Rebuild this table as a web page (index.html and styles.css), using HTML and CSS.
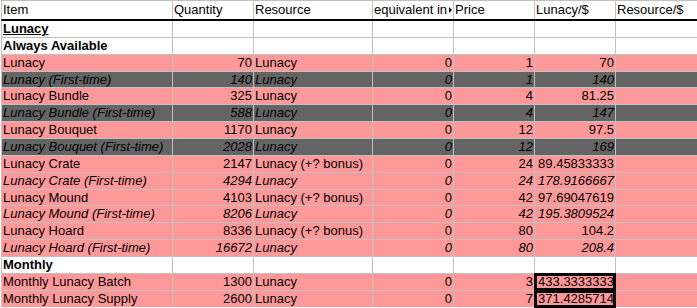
FILE: index.html
```html
<!DOCTYPE html>
<html>
<head>
<meta charset="utf-8">
<link rel="stylesheet" href="styles.css">
</head>
<body>
<div class="sheet">
  <div class="grid head">
    <div class="c">Item</div>
    <div class="c">Quantity</div>
    <div class="c">Resource</div>
    <div class="c ovf"><span class="clip">equivalent in</span><svg class="tri" width="3" height="6" viewBox="0 0 3 6"><polygon points="0,0 3,3 0,6" fill="#000"/></svg></div>
    <div class="c">Price</div>
    <div class="c">Lunacy/$</div>
    <div class="c">Resource/$</div>
  </div>
  <div class="grid body">
    <div class="row white">
      <div class="c b u">Lunacy</div><div class="c"></div><div class="c"></div><div class="c"></div><div class="c"></div><div class="c"></div><div class="c"></div>
    </div>
    <div class="row white">
      <div class="c b">Always Available</div><div class="c"></div><div class="c"></div><div class="c"></div><div class="c"></div><div class="c"></div><div class="c"></div>
    </div>
    <div class="row pink">
      <div class="c">Lunacy</div><div class="c r">70</div><div class="c">Lunacy</div><div class="c r">0</div><div class="c r">1</div><div class="c r">70</div><div class="c"></div>
    </div>
    <div class="row gray i">
      <div class="c">Lunacy (First-time)</div><div class="c r">140</div><div class="c">Lunacy</div><div class="c r">0</div><div class="c r">1</div><div class="c r">140</div><div class="c"></div>
    </div>
    <div class="row pink">
      <div class="c">Lunacy Bundle</div><div class="c r">325</div><div class="c">Lunacy</div><div class="c r">0</div><div class="c r">4</div><div class="c r">81.25</div><div class="c"></div>
    </div>
    <div class="row gray i">
      <div class="c">Lunacy Bundle (First-time)</div><div class="c r">588</div><div class="c">Lunacy</div><div class="c r">0</div><div class="c r">4</div><div class="c r">147</div><div class="c"></div>
    </div>
    <div class="row pink">
      <div class="c">Lunacy Bouquet</div><div class="c r">1170</div><div class="c">Lunacy</div><div class="c r">0</div><div class="c r">12</div><div class="c r">97.5</div><div class="c"></div>
    </div>
    <div class="row gray i">
      <div class="c">Lunacy Bouquet (First-time)</div><div class="c r">2028</div><div class="c">Lunacy</div><div class="c r">0</div><div class="c r">12</div><div class="c r">169</div><div class="c"></div>
    </div>
    <div class="row pink">
      <div class="c">Lunacy Crate</div><div class="c r">2147</div><div class="c">Lunacy (+? bonus)</div><div class="c r">0</div><div class="c r">24</div><div class="c r">89.45833333</div><div class="c"></div>
    </div>
    <div class="row pink i">
      <div class="c">Lunacy Crate (First-time)</div><div class="c r">4294</div><div class="c">Lunacy</div><div class="c r">0</div><div class="c r">24</div><div class="c r">178.9166667</div><div class="c"></div>
    </div>
    <div class="row pink">
      <div class="c">Lunacy Mound</div><div class="c r">4103</div><div class="c">Lunacy (+? bonus)</div><div class="c r">0</div><div class="c r">42</div><div class="c r">97.69047619</div><div class="c"></div>
    </div>
    <div class="row pink i">
      <div class="c">Lunacy Mound (First-time)</div><div class="c r">8206</div><div class="c">Lunacy</div><div class="c r">0</div><div class="c r">42</div><div class="c r">195.3809524</div><div class="c"></div>
    </div>
    <div class="row pink">
      <div class="c">Lunacy Hoard</div><div class="c r">8336</div><div class="c">Lunacy (+? bonus)</div><div class="c r">0</div><div class="c r">80</div><div class="c r">104.2</div><div class="c"></div>
    </div>
    <div class="row pink i">
      <div class="c">Lunacy Hoard (First-time)</div><div class="c r">16672</div><div class="c">Lunacy</div><div class="c r">0</div><div class="c r">80</div><div class="c r">208.4</div><div class="c"></div>
    </div>
    <div class="row white">
      <div class="c b">Monthly</div><div class="c"></div><div class="c"></div><div class="c"></div><div class="c"></div><div class="c"></div><div class="c"></div>
    </div>
    <div class="row pink">
      <div class="c">Monthly Lunacy Batch</div><div class="c r">1300</div><div class="c">Lunacy</div><div class="c r">0</div><div class="c r">3</div><div class="c r boxed">433.3333333</div><div class="c"></div>
    </div>
    <div class="row pink">
      <div class="c">Monthly Lunacy Supply</div><div class="c r">2600</div><div class="c">Lunacy</div><div class="c r">0</div><div class="c r">7</div><div class="c r boxed">371.4285714</div><div class="c"></div>
    </div>
  </div>
</div>
</body>
</html>
```
FILE: styles.css
```css
html, body {
  margin: 0;
  padding: 0;
  background: #ffffff;
}
body {
  width: 697px;
  height: 308px;
  overflow: hidden;
  font-family: "Liberation Sans", Arial, sans-serif;
  font-size: 13px;
  color: #000000;
}
.sheet {
  padding-left: 1px;
}
.grid {
  display: grid;
  grid-template-columns: 170px 80px 118px 80px 80px 80px 81px;
  column-gap: 1px;
  row-gap: 1px;
  background: #c0c0c0;
  border-left: 1px solid #c0c0c0;
}
.head {
  border-top: 1px solid #c0c0c0;
  border-bottom: 2px solid #000000;
  grid-auto-rows: 18px;
}
.head .c {
  background: #ffffff;
  line-height: 18px;
}
.body {
  grid-auto-rows: 15.87px;
}
.row {
  display: contents;
}
.c {
  padding: 0 1px 0 1px;
  line-height: 16px;
  white-space: nowrap;
  position: relative;
}
.white .c { background: #ffffff; }
.pink .c { background: #ff9999; }
.gray .c { background: #646464; }
.i .c { font-style: italic; }
.b { font-weight: bold; }
.u { text-decoration: underline; }
.r { text-align: right; }
.ovf {
  display: flex;
  align-items: center;
}
.clip {
  flex: none;
}
.tri {
  margin-left: auto;
  margin-right: 0;
  flex: none;
}
.boxed {
  outline: 3px solid #000000;
  outline-offset: -2px;
  z-index: 1;
}
```
